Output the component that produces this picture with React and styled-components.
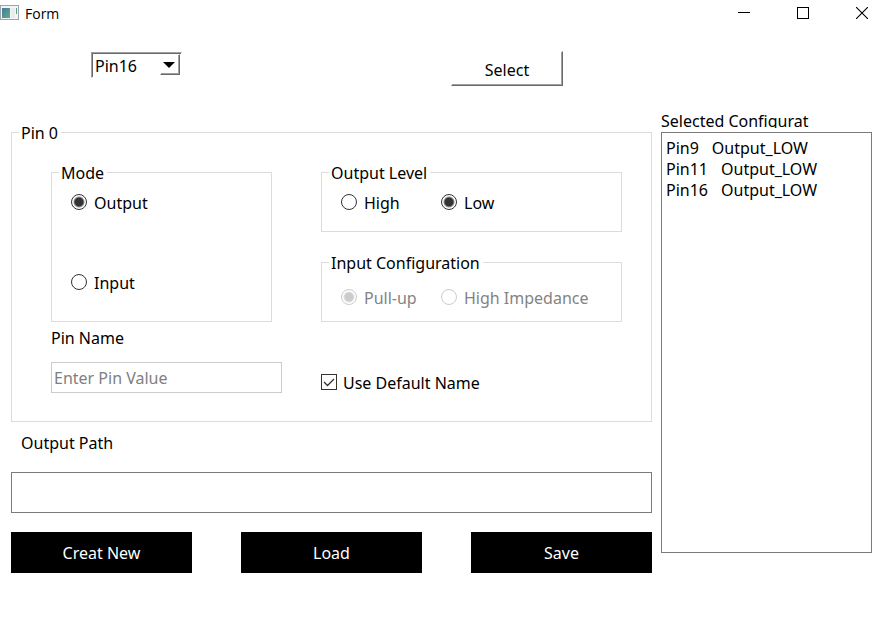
import React, { useState } from "react";
import styled, { createGlobalStyle } from "styled-components";

const GlobalStyle = createGlobalStyle`
  *, *::before, *::after { box-sizing: border-box; }
  body { margin: 0; background: #fff; }
  body, button, input, select {
    font-family: "Noto Sans", sans-serif;
    font-size: 16px;
    line-height: 20px;
    color: #000;
  }
`;

const Window = styled.div`
  min-height: 100vh;
  background: #fff;
`;

const TitleBar = styled.header`
  display: flex;
  align-items: center;
  height: 26px;
`;

const TitleText = styled.h1`
  flex: 1;
  margin: 0 0 0 6px;
  padding-top: 2px;
  font: 400 14px/20px "Open Sans", sans-serif;
`;

const WindowButtons = styled.div`
  display: flex;
  gap: 17px;
`;

const WindowButton = styled.button`
  display: flex;
  align-items: center;
  justify-content: center;
  width: 42px;
  height: 26px;
  padding: 0;
  border: 0;
  background: none;
`;

const Main = styled.main`
  display: grid;
  grid-template-columns: minmax(0, 1fr) 211px;
  gap: 9px;
  padding: 25px 11px 20px;
`;

const Column = styled.div`
  display: flex;
  flex-direction: column;
`;

const PinPicker = styled.div`
  display: flex;
  justify-content: space-between;
  align-items: flex-start;
  padding: 0 89px 0 80px;
  margin-bottom: 35px;
`;

const Combo = styled.div`
  position: relative;
  width: 91px;
  height: 26px;
  margin-top: 1px;
  border: 1px solid;
  border-color: #a0a0a0 #fff #fff #a0a0a0;
  box-shadow: inset 1px 1px #696969;
`;

const ComboSelect = styled.select`
  width: 100%;
  height: 100%;
  padding: 2px 0 0 3px;
  border: 0;
  background: none;
  appearance: none;
`;

const ComboArrow = styled.span`
  position: absolute;
  top: 1px;
  right: 1px;
  display: flex;
  align-items: center;
  justify-content: center;
  width: 20px;
  height: 21px;
  padding-right: 2px;
  border: 1px solid;
  border-color: #fff #696969 #696969 #fff;
  box-shadow: inset -1px -1px #a0a0a0;
  pointer-events: none;
`;

const RaisedButton = styled.button`
  width: 112px;
  height: 35px;
  padding: 2px 0 0;
  border: 1px solid;
  border-color: #fff #696969 #696969 #fff;
  box-shadow: inset -1px -1px #a0a0a0;
  background: #fff;
`;

const Group = styled.fieldset`
  min-width: 0;
  margin: 0;
  padding: ${(p) => p.$padding};
  border: 1px solid #dcdcdc;
`;

const GroupTitle = styled.legend`
  margin-left: ${(p) => p.$inset};
  padding: 2px 3px 0 2px;
  line-height: 21px;
`;

const PinGrid = styled.div`
  display: grid;
  grid-template-columns: minmax(0, 231fr) minmax(0, 301fr);
  column-gap: 39px;
  row-gap: 6px;
`;

const ModeArea = styled.div`
  padding-right: 10px;
`;

const Stack = styled.div`
  display: flex;
  flex-direction: column;
  gap: ${(p) => p.$gap};
`;

const OptionPair = styled.div`
  display: grid;
  grid-template-columns: 100px minmax(0, 1fr);
`;

const Option = styled.label`
  display: flex;
  align-items: flex-start;
  gap: ${(p) => p.$gap || "7px"};
  height: 20px;
  line-height: 22px;
  white-space: nowrap;
  color: ${(p) => (p.$disabled ? "#838383" : "#000")};
`;

const Radio = styled.input.attrs({ type: "radio" })`
  appearance: none;
  flex: none;
  width: 16px;
  height: 16px;
  margin: 2px 0 0;
  border: 1px solid #333;
  border-radius: 50%;
  background: #fff;

  &:checked {
    background: radial-gradient(circle, #333 0 4px, #fff 6px);
  }
  &:disabled { border-color: #ccc; }
  &:disabled:checked {
    background: radial-gradient(circle, #ccc 0 4px, #fff 6px);
  }
`;

const CheckMark = styled.span`
  display: grid;
  width: 16px;
  height: 16px;
  margin-top: 2px;

  & > * { grid-area: 1 / 1; }
  svg { pointer-events: none; }
  input:not(:checked) + svg { visibility: hidden; }
`;

const Check = styled.input.attrs({ type: "checkbox" })`
  appearance: none;
  width: 16px;
  height: 16px;
  margin: 0;
  border: 1px solid #333;
  background: #fff;
`;

const DefaultName = styled.div`
  align-self: end;
  padding-bottom: 1px;
`;

const FieldLabel = styled.label`
  padding-left: ${(p) => p.$inset || "0"};
`;

const TextField = styled.input.attrs({ type: "text" })`
  width: 100%;
  height: ${(p) => p.$height};
  padding: 0 2px;
  border: 1px solid ${(p) => p.$edge};
  background: #fff;

  &::placeholder { color: #808080; opacity: 1; }
`;

const PathArea = styled(Stack)`
  margin: 11px 0 19px;
`;

const Actions = styled.div`
  display: grid;
  grid-template-columns: repeat(3, minmax(0, 1fr));
  gap: 49px;
`;

const ActionButton = styled.button`
  height: 41px;
  padding: 0;
  border: 0;
  background: #000;
  color: #fff;
`;

const ListColumn = styled(Column)`
  padding: 60px 0 20px;
`;

const ListTitle = styled.h2`
  width: 148px;
  height: 17px;
  margin: 0 0 4px;
  overflow: hidden;
  white-space: nowrap;
  font-size: 16px;
  font-weight: 400;
  line-height: 20px;
`;

const PinList = styled.ul`
  flex: 1;
  margin: 0;
  padding: 5px 4px;
  border: 1px solid #7a7a7a;
  list-style: none;
`;

const PinItem = styled.li`
  display: flex;
  gap: 13px;
  line-height: 21px;
`;

const pins = [
  ["Pin9", "Output_LOW"],
  ["Pin11", "Output_LOW"],
  ["Pin16", "Output_LOW"],
];

function FormIcon() {
  return (
    <svg width="19" height="16" viewBox="0 0 19 16" aria-hidden="true">
      <defs>
        <linearGradient id="pane" x1="0" y1="0" x2="1" y2="1">
          <stop offset="0" stopColor="#4379a8" />
          <stop offset="1" stopColor="#5fae7e" />
        </linearGradient>
      </defs>
      <rect x="0.5" y="0.5" width="18" height="14" fill="#f4f4f6" stroke="#a0a4aa" />
      <rect x="2" y="3" width="8" height="10" fill="url(#pane)" />
      <rect x="11" y="3" width="4" height="10" fill="#e9ecee" />
      <rect x="16" y="3" width="1" height="6" fill="#58a088" />
    </svg>
  );
}

export default function App() {
  const [mode, setMode] = useState("output");
  const [level, setLevel] = useState("low");
  const [useDefault, setUseDefault] = useState(true);

  return (
    <Window>
      <GlobalStyle />
      <TitleBar>
        <FormIcon />
        <TitleText>Form</TitleText>
        <WindowButtons>
          <WindowButton aria-label="Minimize">
            <svg width="12" height="12" viewBox="0 0 12 12"><path d="M0 5.5H12" stroke="#000" /></svg>
          </WindowButton>
          <WindowButton aria-label="Maximize">
            <svg width="12" height="12" viewBox="0 0 12 12"><rect x="0.5" y="0.5" width="11" height="11" fill="none" stroke="#000" /></svg>
          </WindowButton>
          <WindowButton aria-label="Close">
            <svg width="12" height="12" viewBox="0 0 12 12"><path d="M0 0L12 12M12 0L0 12" stroke="#000" strokeWidth="1.1" /></svg>
          </WindowButton>
        </WindowButtons>
      </TitleBar>

      <Main>
        <Column>
          <PinPicker>
            <Combo>
              <ComboSelect aria-label="Pin" defaultValue="Pin16">
                {["Pin9", "Pin11", "Pin16"].map((p) => <option key={p}>{p}</option>)}
              </ComboSelect>
              <ComboArrow>
                <svg width="12" height="6" viewBox="0 0 12 6"><path d="M0 0H12L6 6Z" fill="#000" /></svg>
              </ComboArrow>
            </Combo>
            <RaisedButton>Select</RaisedButton>
          </PinPicker>

          <Group $padding="17px 29px 28px 39px">
            <GroupTitle $inset="-32px">Pin 0</GroupTitle>
            <PinGrid>
              <ModeArea>
                <Group $padding="8px 19px 29px">
                  <GroupTitle $inset="-12px">Mode</GroupTitle>
                  <Stack $gap="60px">
                    <Option>
                      <Radio name="mode" checked={mode === "output"} onChange={() => setMode("output")} />
                      Output
                    </Option>
                    <Option>
                      <Radio name="mode" checked={mode === "input"} onChange={() => setMode("input")} />
                      Input
                    </Option>
                  </Stack>
                </Group>
              </ModeArea>
              <Stack $gap="19px">
                <Group $padding="8px 19px 19px">
                  <GroupTitle $inset="-12px">Output Level</GroupTitle>
                  <OptionPair>
                    <Option>
                      <Radio name="level" checked={level === "high"} onChange={() => setLevel("high")} />
                      High
                    </Option>
                    <Option>
                      <Radio name="level" checked={level === "low"} onChange={() => setLevel("low")} />
                      Low
                    </Option>
                  </OptionPair>
                </Group>
                <Group $padding="13px 19px 14px">
                  <GroupTitle $inset="-12px">Input Configuration</GroupTitle>
                  <OptionPair>
                    <Option $disabled>
                      <Radio name="pull" disabled defaultChecked />
                      Pull-up
                    </Option>
                    <Option $disabled>
                      <Radio name="pull" disabled />
                      High Impedance
                    </Option>
                  </OptionPair>
                </Group>
              </Stack>
              <Stack $gap="14px">
                <FieldLabel htmlFor="pin-name">Pin Name</FieldLabel>
                <TextField id="pin-name" $height="31px" $edge="#ccc" placeholder="Enter Pin Value" disabled={useDefault} />
              </Stack>
              <DefaultName>
                <Option $gap="6px">
                  <CheckMark>
                    <Check checked={useDefault} onChange={(e) => setUseDefault(e.target.checked)} />
                    <svg width="16" height="16" viewBox="0 0 16 16"><path d="M3 8L6.5 11.5L13 5" fill="none" stroke="#333" strokeWidth="1.3" /></svg>
                  </CheckMark>
                  Use Default Name
                </Option>
              </DefaultName>
            </PinGrid>
          </Group>

          <PathArea $gap="19px">
            <FieldLabel htmlFor="output-path" $inset="10px">Output Path</FieldLabel>
            <TextField id="output-path" $height="41px" $edge="#7a7a7a" />
          </PathArea>

          <Actions>
            <ActionButton>Creat New</ActionButton>
            <ActionButton>Load</ActionButton>
            <ActionButton>Save</ActionButton>
          </Actions>
        </Column>

        <ListColumn>
          <ListTitle>Selected Configuration</ListTitle>
          <PinList>
            {pins.map(([pin, state]) => (
              <PinItem key={pin}>
                <span>{pin}</span>
                <span>{state}</span>
              </PinItem>
            ))}
          </PinList>
        </ListColumn>
      </Main>
    </Window>
  );
}
